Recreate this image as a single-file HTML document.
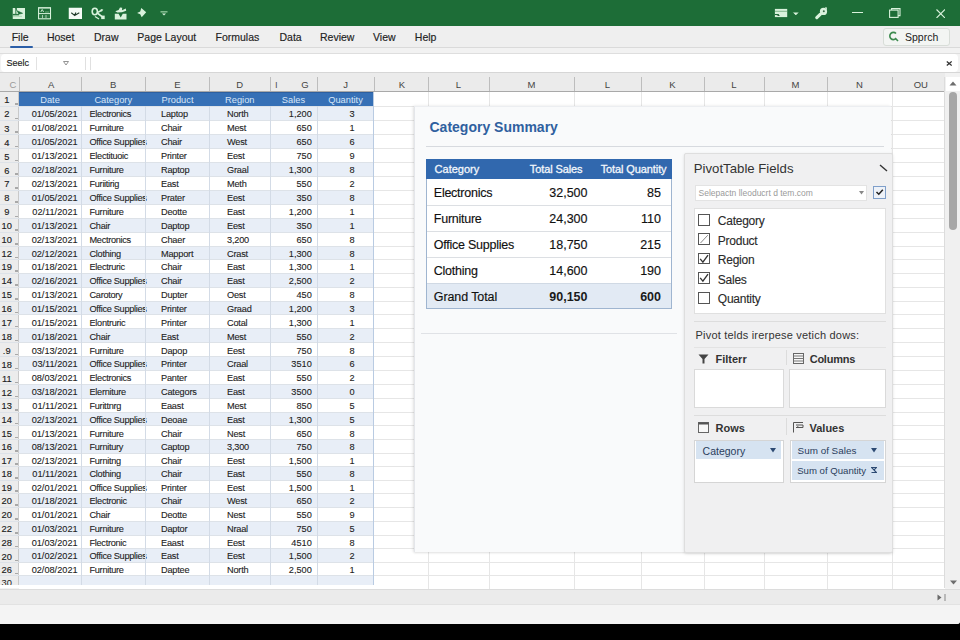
<!DOCTYPE html>
<html><head><meta charset="utf-8"><style>
*{box-sizing:border-box;margin:0;padding:0}
html,body{width:960px;height:640px;overflow:hidden;background:#000;font-family:"Liberation Sans",sans-serif;}
.a{position:absolute}
#app{position:absolute;left:0;top:0;width:960px;height:624px;background:#f2f2f2;overflow:hidden;border-bottom-right-radius:3px}
.t{position:absolute;white-space:nowrap;line-height:1}
</style></head><body><div id="app">

<div class="a" style="left:0;top:0;width:960px;height:25.5px;background:#1d6d37"></div>
<div class="a" style="left:0;top:25.5px;width:960px;height:21.5px;background:#efefef"></div>
<div class="a" style="left:0;top:47px;width:960px;height:1.2px;background:#dadada"></div>
<div class="a" style="left:0;top:53px;width:960px;height:1.2px;background:#dedede"></div>
<div class="a" style="left:1px;top:54px;width:957px;height:18px;background:#fff;border-radius:4px"></div>
<div class="a" style="left:0;top:72px;width:960px;height:1px;background:#d6d6d6"></div>
<div class="t" style="left:11.7px;top:32px;font-size:10.5px;color:#222;-webkit-text-stroke:0.15px #222">File</div>
<div class="t" style="left:46.9px;top:32px;font-size:10.5px;color:#222;-webkit-text-stroke:0.15px #222">Hoset</div>
<div class="t" style="left:94px;top:32px;font-size:10.5px;color:#222;-webkit-text-stroke:0.15px #222">Draw</div>
<div class="t" style="left:137.3px;top:32px;font-size:10.5px;color:#222;-webkit-text-stroke:0.15px #222">Page Layout</div>
<div class="t" style="left:215.5px;top:32px;font-size:10.5px;color:#222;-webkit-text-stroke:0.15px #222">Formulas</div>
<div class="t" style="left:279.5px;top:32px;font-size:10.5px;color:#222;-webkit-text-stroke:0.15px #222">Data</div>
<div class="t" style="left:320px;top:32px;font-size:10.5px;color:#222;-webkit-text-stroke:0.15px #222">Review</div>
<div class="t" style="left:373px;top:32px;font-size:10.5px;color:#222;-webkit-text-stroke:0.15px #222">View</div>
<div class="t" style="left:414.8px;top:32px;font-size:10.5px;color:#222;-webkit-text-stroke:0.15px #222">Help</div>
<div class="a" style="left:10px;top:46.3px;width:22.5px;height:2px;background:#2b5ea7;border-radius:1px"></div>
<div class="a" style="left:0;top:73px;width:944.5px;height:18.5px;background:#ebebeb;border-bottom:1px solid #a9a9a9"></div>
<div class="a" style="left:18.5px;top:77px;width:1px;height:14px;background:#bdbdbd"></div>
<div class="t" style="left:20.2px;width:62px;text-align:center;top:80px;font-size:9.5px;color:#444">A</div>
<div class="a" style="left:80.5px;top:77px;width:1px;height:14px;background:#bdbdbd"></div>
<div class="t" style="left:81px;width:64.5px;text-align:center;top:80px;font-size:9.5px;color:#444">B</div>
<div class="a" style="left:145.0px;top:77px;width:1px;height:14px;background:#bdbdbd"></div>
<div class="t" style="left:145.5px;width:64.0px;text-align:center;top:80px;font-size:9.5px;color:#444">E</div>
<div class="a" style="left:209.0px;top:77px;width:1px;height:14px;background:#bdbdbd"></div>
<div class="t" style="left:209.5px;width:60.5px;text-align:center;top:80px;font-size:9.5px;color:#444">D</div>
<div class="a" style="left:269.5px;top:77px;width:1px;height:14px;background:#bdbdbd"></div>
<div class="t" style="left:281.5px;width:47px;text-align:center;top:80px;font-size:9.5px;color:#444">G</div>
<div class="a" style="left:316.5px;top:77px;width:1px;height:14px;background:#bdbdbd"></div>
<div class="t" style="left:317px;width:57px;text-align:center;top:80px;font-size:9.5px;color:#444">J</div>
<div class="a" style="left:373.5px;top:77px;width:1px;height:14px;background:#bdbdbd"></div>
<div class="t" style="left:375px;width:54px;text-align:center;top:80px;font-size:9.5px;color:#444">K</div>
<div class="a" style="left:427.5px;top:77px;width:1px;height:14px;background:#bdbdbd"></div>
<div class="t" style="left:428px;width:61px;text-align:center;top:80px;font-size:9.5px;color:#444">L</div>
<div class="a" style="left:488.5px;top:77px;width:1px;height:14px;background:#bdbdbd"></div>
<div class="t" style="left:489px;width:85px;text-align:center;top:80px;font-size:9.5px;color:#444">M</div>
<div class="a" style="left:573.5px;top:77px;width:1px;height:14px;background:#bdbdbd"></div>
<div class="t" style="left:574px;width:67px;text-align:center;top:80px;font-size:9.5px;color:#444">L</div>
<div class="a" style="left:640.5px;top:77px;width:1px;height:14px;background:#bdbdbd"></div>
<div class="t" style="left:641px;width:63px;text-align:center;top:80px;font-size:9.5px;color:#444">K</div>
<div class="a" style="left:703.5px;top:77px;width:1px;height:14px;background:#bdbdbd"></div>
<div class="t" style="left:704px;width:60px;text-align:center;top:80px;font-size:9.5px;color:#444">L</div>
<div class="a" style="left:763.5px;top:77px;width:1px;height:14px;background:#bdbdbd"></div>
<div class="t" style="left:764px;width:63px;text-align:center;top:80px;font-size:9.5px;color:#444">M</div>
<div class="a" style="left:826.5px;top:77px;width:1px;height:14px;background:#bdbdbd"></div>
<div class="t" style="left:827px;width:65px;text-align:center;top:80px;font-size:9.5px;color:#444">N</div>
<div class="a" style="left:891.5px;top:77px;width:1px;height:14px;background:#bdbdbd"></div>
<div class="t" style="left:894.5px;width:52.5px;text-align:center;top:80px;font-size:9.5px;color:#444">OU</div>
<div class="t" style="left:9.5px;top:80px;font-size:9.5px;color:#999">C</div>

<div class="t" style="left:275px;top:80px;font-size:9.5px;color:#555">I</div>
<div class="a" style="left:19px;top:92.0px;width:925.5px;height:496.5px;background:#fff"></div>
<div class="a" style="left:0;top:92.0px;width:19px;height:493.5px;background:#ececec;border-right:1px solid #c9c9c9"></div>
<div class="a" style="left:374px;top:105.75px;width:570.5px;height:1px;background:#e6e6e6"></div>
<div class="a" style="left:374px;top:120.10px;width:570.5px;height:1px;background:#e6e6e6"></div>
<div class="a" style="left:374px;top:133.90px;width:570.5px;height:1px;background:#e6e6e6"></div>
<div class="a" style="left:374px;top:148.25px;width:570.5px;height:1px;background:#e6e6e6"></div>
<div class="a" style="left:374px;top:162.10px;width:570.5px;height:1px;background:#e6e6e6"></div>
<div class="a" style="left:374px;top:175.90px;width:570.5px;height:1px;background:#e6e6e6"></div>
<div class="a" style="left:374px;top:189.90px;width:570.5px;height:1px;background:#e6e6e6"></div>
<div class="a" style="left:374px;top:203.90px;width:570.5px;height:1px;background:#e6e6e6"></div>
<div class="a" style="left:374px;top:218.00px;width:570.5px;height:1px;background:#e6e6e6"></div>
<div class="a" style="left:374px;top:231.80px;width:570.5px;height:1px;background:#e6e6e6"></div>
<div class="a" style="left:374px;top:245.50px;width:570.5px;height:1px;background:#e6e6e6"></div>
<div class="a" style="left:374px;top:259.00px;width:570.5px;height:1px;background:#e6e6e6"></div>
<div class="a" style="left:374px;top:272.60px;width:570.5px;height:1px;background:#e6e6e6"></div>
<div class="a" style="left:374px;top:286.56px;width:570.5px;height:1px;background:#e6e6e6"></div>
<div class="a" style="left:374px;top:300.52px;width:570.5px;height:1px;background:#e6e6e6"></div>
<div class="a" style="left:374px;top:314.48px;width:570.5px;height:1px;background:#e6e6e6"></div>
<div class="a" style="left:374px;top:328.44px;width:570.5px;height:1px;background:#e6e6e6"></div>
<div class="a" style="left:374px;top:342.40px;width:570.5px;height:1px;background:#e6e6e6"></div>
<div class="a" style="left:374px;top:356.20px;width:570.5px;height:1px;background:#e6e6e6"></div>
<div class="a" style="left:374px;top:370.00px;width:570.5px;height:1px;background:#e6e6e6"></div>
<div class="a" style="left:374px;top:384.10px;width:570.5px;height:1px;background:#e6e6e6"></div>
<div class="a" style="left:374px;top:398.10px;width:570.5px;height:1px;background:#e6e6e6"></div>
<div class="a" style="left:374px;top:411.80px;width:570.5px;height:1px;background:#e6e6e6"></div>
<div class="a" style="left:374px;top:425.40px;width:570.5px;height:1px;background:#e6e6e6"></div>
<div class="a" style="left:374px;top:439.20px;width:570.5px;height:1px;background:#e6e6e6"></div>
<div class="a" style="left:374px;top:452.70px;width:570.5px;height:1px;background:#e6e6e6"></div>
<div class="a" style="left:374px;top:465.90px;width:570.5px;height:1px;background:#e6e6e6"></div>
<div class="a" style="left:374px;top:479.60px;width:570.5px;height:1px;background:#e6e6e6"></div>
<div class="a" style="left:374px;top:492.90px;width:570.5px;height:1px;background:#e6e6e6"></div>
<div class="a" style="left:374px;top:506.70px;width:570.5px;height:1px;background:#e6e6e6"></div>
<div class="a" style="left:374px;top:520.75px;width:570.5px;height:1px;background:#e6e6e6"></div>
<div class="a" style="left:374px;top:534.50px;width:570.5px;height:1px;background:#e6e6e6"></div>
<div class="a" style="left:374px;top:548.25px;width:570.5px;height:1px;background:#e6e6e6"></div>
<div class="a" style="left:374px;top:562.00px;width:570.5px;height:1px;background:#e6e6e6"></div>
<div class="a" style="left:374px;top:575.10px;width:570.5px;height:1px;background:#e6e6e6"></div>
<div class="a" style="left:374px;top:588.50px;width:570.5px;height:1px;background:#e6e6e6"></div>
<div class="a" style="left:427.5px;top:92.0px;width:1px;height:496.5px;background:#e6e6e6"></div>
<div class="a" style="left:488.5px;top:92.0px;width:1px;height:496.5px;background:#e6e6e6"></div>
<div class="a" style="left:573.5px;top:92.0px;width:1px;height:496.5px;background:#e6e6e6"></div>
<div class="a" style="left:640.5px;top:92.0px;width:1px;height:496.5px;background:#e6e6e6"></div>
<div class="a" style="left:703.5px;top:92.0px;width:1px;height:496.5px;background:#e6e6e6"></div>
<div class="a" style="left:763.5px;top:92.0px;width:1px;height:496.5px;background:#e6e6e6"></div>
<div class="a" style="left:826.5px;top:92.0px;width:1px;height:496.5px;background:#e6e6e6"></div>
<div class="a" style="left:891.5px;top:92.0px;width:1px;height:496.5px;background:#e6e6e6"></div>
<div class="a" style="left:19px;top:92.0px;width:355px;height:14.25px;background:#3670b6;border-top:1px solid #2d5f9f"></div>
<div class="t" style="left:19px;width:62px;text-align:center;top:95.60px;font-size:9.3px;color:#d6e6f9">Date</div>
<div class="t" style="left:81px;width:64.5px;text-align:center;top:95.60px;font-size:9.3px;color:#d6e6f9">Category</div>
<div class="t" style="left:145.5px;width:64.0px;text-align:center;top:95.60px;font-size:9.3px;color:#d6e6f9">Product</div>
<div class="t" style="left:209.5px;width:60.5px;text-align:center;top:95.60px;font-size:9.3px;color:#d6e6f9">Region</div>
<div class="t" style="left:270px;width:47px;text-align:center;top:95.60px;font-size:9.3px;color:#d6e6f9">Sales</div>
<div class="t" style="left:317px;width:57px;text-align:center;top:95.60px;font-size:9.3px;color:#d6e6f9">Quantity</div>
<div class="a" style="left:19px;top:106.25px;width:355px;height:14.35px;background:#e8eef7"></div>
<div class="a" style="left:0;top:105.75px;width:374px;height:1px;background:#dde2e8"></div>
<div class="t" style="left:0;width:13.5px;text-align:center;top:110.42px;font-size:9.3px;color:#222;-webkit-text-stroke:0.15px #222">2</div>
<div class="a" style="left:14.5px;top:117.60px;width:3px;height:1.5px;background:#a8a8a8"></div>
<div class="t" style="right:882.4px;top:110.22px;color:#222;font-size:9.2px;-webkit-text-stroke:0.1px #222">01/05/2021</div>
<div class="t" style="left:89.5px;top:110.22px;letter-spacing:-0.3px;color:#222;font-size:9.2px;-webkit-text-stroke:0.1px #222">Electronics</div>
<div class="t" style="left:161px;top:110.22px;letter-spacing:-0.2px;color:#222;font-size:9.2px;-webkit-text-stroke:0.1px #222">Laptop</div>
<div class="t" style="left:227px;top:110.22px;letter-spacing:-0.2px;color:#222;font-size:9.2px;-webkit-text-stroke:0.1px #222">North</div>
<div class="t" style="right:648.2px;top:110.22px;color:#222;font-size:9.2px;-webkit-text-stroke:0.1px #222">1,200</div>
<div class="t" style="left:317px;width:70px;text-align:center;top:110.22px;color:#222;font-size:9.2px;-webkit-text-stroke:0.1px #222">3</div>
<div class="a" style="left:19px;top:120.60px;width:355px;height:13.80px;background:#ffffff"></div>
<div class="a" style="left:0;top:120.10px;width:374px;height:1px;background:#dde2e8"></div>
<div class="t" style="left:0;width:13.5px;text-align:center;top:124.50px;font-size:9.3px;color:#222;-webkit-text-stroke:0.15px #222">3</div>
<div class="a" style="left:14.5px;top:131.40px;width:3px;height:1.5px;background:#a8a8a8"></div>
<div class="t" style="right:882.4px;top:124.30px;color:#222;font-size:9.2px;-webkit-text-stroke:0.1px #222">01/08/2021</div>
<div class="t" style="left:89.5px;top:124.30px;letter-spacing:-0.3px;color:#222;font-size:9.2px;-webkit-text-stroke:0.1px #222">Furniture</div>
<div class="t" style="left:161px;top:124.30px;letter-spacing:-0.2px;color:#222;font-size:9.2px;-webkit-text-stroke:0.1px #222">Chair</div>
<div class="t" style="left:227px;top:124.30px;letter-spacing:-0.2px;color:#222;font-size:9.2px;-webkit-text-stroke:0.1px #222">Mest</div>
<div class="t" style="right:648.2px;top:124.30px;color:#222;font-size:9.2px;-webkit-text-stroke:0.1px #222">650</div>
<div class="t" style="left:317px;width:70px;text-align:center;top:124.30px;color:#222;font-size:9.2px;-webkit-text-stroke:0.1px #222">1</div>
<div class="a" style="left:19px;top:134.40px;width:355px;height:14.35px;background:#e8eef7"></div>
<div class="a" style="left:0;top:133.90px;width:374px;height:1px;background:#dde2e8"></div>
<div class="t" style="left:0;width:13.5px;text-align:center;top:138.57px;font-size:9.3px;color:#222;-webkit-text-stroke:0.15px #222">4</div>
<div class="a" style="left:14.5px;top:145.75px;width:3px;height:1.5px;background:#a8a8a8"></div>
<div class="t" style="right:882.4px;top:138.38px;color:#222;font-size:9.2px;-webkit-text-stroke:0.1px #222">01/05/2021</div>
<div class="t" style="left:89.5px;top:138.38px;letter-spacing:-0.3px;color:#222;font-size:9.2px;-webkit-text-stroke:0.1px #222">Office Supplies</div>
<div class="t" style="left:161px;top:138.38px;letter-spacing:-0.2px;color:#222;font-size:9.2px;-webkit-text-stroke:0.1px #222">Chair</div>
<div class="t" style="left:227px;top:138.38px;letter-spacing:-0.2px;color:#222;font-size:9.2px;-webkit-text-stroke:0.1px #222">West</div>
<div class="t" style="right:648.2px;top:138.38px;color:#222;font-size:9.2px;-webkit-text-stroke:0.1px #222">650</div>
<div class="t" style="left:317px;width:70px;text-align:center;top:138.38px;color:#222;font-size:9.2px;-webkit-text-stroke:0.1px #222">6</div>
<div class="a" style="left:19px;top:148.75px;width:355px;height:13.85px;background:#ffffff"></div>
<div class="a" style="left:0;top:148.25px;width:374px;height:1px;background:#dde2e8"></div>
<div class="t" style="left:0;width:13.5px;text-align:center;top:152.68px;font-size:9.3px;color:#222;-webkit-text-stroke:0.15px #222">5</div>
<div class="a" style="left:14.5px;top:159.60px;width:3px;height:1.5px;background:#a8a8a8"></div>
<div class="t" style="right:882.4px;top:152.48px;color:#222;font-size:9.2px;-webkit-text-stroke:0.1px #222">01/13/2021</div>
<div class="t" style="left:89.5px;top:152.48px;letter-spacing:-0.3px;color:#222;font-size:9.2px;-webkit-text-stroke:0.1px #222">Electituoic</div>
<div class="t" style="left:161px;top:152.48px;letter-spacing:-0.2px;color:#222;font-size:9.2px;-webkit-text-stroke:0.1px #222">Printer</div>
<div class="t" style="left:227px;top:152.48px;letter-spacing:-0.2px;color:#222;font-size:9.2px;-webkit-text-stroke:0.1px #222">Eest</div>
<div class="t" style="right:648.2px;top:152.48px;color:#222;font-size:9.2px;-webkit-text-stroke:0.1px #222">750</div>
<div class="t" style="left:317px;width:70px;text-align:center;top:152.48px;color:#222;font-size:9.2px;-webkit-text-stroke:0.1px #222">9</div>
<div class="a" style="left:19px;top:162.60px;width:355px;height:13.80px;background:#e8eef7"></div>
<div class="a" style="left:0;top:162.10px;width:374px;height:1px;background:#dde2e8"></div>
<div class="t" style="left:0;width:13.5px;text-align:center;top:166.50px;font-size:9.3px;color:#222;-webkit-text-stroke:0.15px #222">6</div>
<div class="a" style="left:14.5px;top:173.40px;width:3px;height:1.5px;background:#a8a8a8"></div>
<div class="t" style="right:882.4px;top:166.30px;color:#222;font-size:9.2px;-webkit-text-stroke:0.1px #222">02/18/2021</div>
<div class="t" style="left:89.5px;top:166.30px;letter-spacing:-0.3px;color:#222;font-size:9.2px;-webkit-text-stroke:0.1px #222">Furniture</div>
<div class="t" style="left:161px;top:166.30px;letter-spacing:-0.2px;color:#222;font-size:9.2px;-webkit-text-stroke:0.1px #222">Raptop</div>
<div class="t" style="left:227px;top:166.30px;letter-spacing:-0.2px;color:#222;font-size:9.2px;-webkit-text-stroke:0.1px #222">Graal</div>
<div class="t" style="right:648.2px;top:166.30px;color:#222;font-size:9.2px;-webkit-text-stroke:0.1px #222">1,300</div>
<div class="t" style="left:317px;width:70px;text-align:center;top:166.30px;color:#222;font-size:9.2px;-webkit-text-stroke:0.1px #222">8</div>
<div class="a" style="left:19px;top:176.40px;width:355px;height:14.00px;background:#ffffff"></div>
<div class="a" style="left:0;top:175.90px;width:374px;height:1px;background:#dde2e8"></div>
<div class="t" style="left:0;width:13.5px;text-align:center;top:180.40px;font-size:9.3px;color:#222;-webkit-text-stroke:0.15px #222">7</div>
<div class="a" style="left:14.5px;top:187.40px;width:3px;height:1.5px;background:#a8a8a8"></div>
<div class="t" style="right:882.4px;top:180.20px;color:#222;font-size:9.2px;-webkit-text-stroke:0.1px #222">02/13/2021</div>
<div class="t" style="left:89.5px;top:180.20px;letter-spacing:-0.3px;color:#222;font-size:9.2px;-webkit-text-stroke:0.1px #222">Furiitirig</div>
<div class="t" style="left:161px;top:180.20px;letter-spacing:-0.2px;color:#222;font-size:9.2px;-webkit-text-stroke:0.1px #222">East</div>
<div class="t" style="left:227px;top:180.20px;letter-spacing:-0.2px;color:#222;font-size:9.2px;-webkit-text-stroke:0.1px #222">Meth</div>
<div class="t" style="right:648.2px;top:180.20px;color:#222;font-size:9.2px;-webkit-text-stroke:0.1px #222">550</div>
<div class="t" style="left:317px;width:70px;text-align:center;top:180.20px;color:#222;font-size:9.2px;-webkit-text-stroke:0.1px #222">2</div>
<div class="a" style="left:19px;top:190.40px;width:355px;height:14.00px;background:#e8eef7"></div>
<div class="a" style="left:0;top:189.90px;width:374px;height:1px;background:#dde2e8"></div>
<div class="t" style="left:0;width:13.5px;text-align:center;top:194.40px;font-size:9.3px;color:#222;-webkit-text-stroke:0.15px #222">8</div>
<div class="a" style="left:14.5px;top:201.40px;width:3px;height:1.5px;background:#a8a8a8"></div>
<div class="t" style="right:882.4px;top:194.20px;color:#222;font-size:9.2px;-webkit-text-stroke:0.1px #222">01/05/2021</div>
<div class="t" style="left:89.5px;top:194.20px;letter-spacing:-0.3px;color:#222;font-size:9.2px;-webkit-text-stroke:0.1px #222">Office Supplies</div>
<div class="t" style="left:161px;top:194.20px;letter-spacing:-0.2px;color:#222;font-size:9.2px;-webkit-text-stroke:0.1px #222">Prater</div>
<div class="t" style="left:227px;top:194.20px;letter-spacing:-0.2px;color:#222;font-size:9.2px;-webkit-text-stroke:0.1px #222">Eest</div>
<div class="t" style="right:648.2px;top:194.20px;color:#222;font-size:9.2px;-webkit-text-stroke:0.1px #222">350</div>
<div class="t" style="left:317px;width:70px;text-align:center;top:194.20px;color:#222;font-size:9.2px;-webkit-text-stroke:0.1px #222">8</div>
<div class="a" style="left:19px;top:204.40px;width:355px;height:14.10px;background:#ffffff"></div>
<div class="a" style="left:0;top:203.90px;width:374px;height:1px;background:#dde2e8"></div>
<div class="t" style="left:0;width:13.5px;text-align:center;top:208.45px;font-size:9.3px;color:#222;-webkit-text-stroke:0.15px #222">9</div>
<div class="a" style="left:14.5px;top:215.50px;width:3px;height:1.5px;background:#a8a8a8"></div>
<div class="t" style="right:882.4px;top:208.25px;color:#222;font-size:9.2px;-webkit-text-stroke:0.1px #222">02/11/2021</div>
<div class="t" style="left:89.5px;top:208.25px;letter-spacing:-0.3px;color:#222;font-size:9.2px;-webkit-text-stroke:0.1px #222">Furniture</div>
<div class="t" style="left:161px;top:208.25px;letter-spacing:-0.2px;color:#222;font-size:9.2px;-webkit-text-stroke:0.1px #222">Deotte</div>
<div class="t" style="left:227px;top:208.25px;letter-spacing:-0.2px;color:#222;font-size:9.2px;-webkit-text-stroke:0.1px #222">East</div>
<div class="t" style="right:648.2px;top:208.25px;color:#222;font-size:9.2px;-webkit-text-stroke:0.1px #222">1,200</div>
<div class="t" style="left:317px;width:70px;text-align:center;top:208.25px;color:#222;font-size:9.2px;-webkit-text-stroke:0.1px #222">1</div>
<div class="a" style="left:19px;top:218.50px;width:355px;height:13.80px;background:#e8eef7"></div>
<div class="a" style="left:0;top:218.00px;width:374px;height:1px;background:#dde2e8"></div>
<div class="t" style="left:0;width:13.5px;text-align:center;top:222.40px;font-size:9.3px;color:#222;-webkit-text-stroke:0.15px #222">10</div>
<div class="a" style="left:14.5px;top:229.30px;width:3px;height:1.5px;background:#a8a8a8"></div>
<div class="t" style="right:882.4px;top:222.20px;color:#222;font-size:9.2px;-webkit-text-stroke:0.1px #222">01/13/2021</div>
<div class="t" style="left:89.5px;top:222.20px;letter-spacing:-0.3px;color:#222;font-size:9.2px;-webkit-text-stroke:0.1px #222">Chair</div>
<div class="t" style="left:161px;top:222.20px;letter-spacing:-0.2px;color:#222;font-size:9.2px;-webkit-text-stroke:0.1px #222">Daptop</div>
<div class="t" style="left:227px;top:222.20px;letter-spacing:-0.2px;color:#222;font-size:9.2px;-webkit-text-stroke:0.1px #222">Eest</div>
<div class="t" style="right:648.2px;top:222.20px;color:#222;font-size:9.2px;-webkit-text-stroke:0.1px #222">350</div>
<div class="t" style="left:317px;width:70px;text-align:center;top:222.20px;color:#222;font-size:9.2px;-webkit-text-stroke:0.1px #222">1</div>
<div class="a" style="left:19px;top:232.30px;width:355px;height:13.70px;background:#ffffff"></div>
<div class="a" style="left:0;top:231.80px;width:374px;height:1px;background:#dde2e8"></div>
<div class="t" style="left:0;width:13.5px;text-align:center;top:236.15px;font-size:9.3px;color:#222;-webkit-text-stroke:0.15px #222">10</div>
<div class="a" style="left:14.5px;top:243.00px;width:3px;height:1.5px;background:#a8a8a8"></div>
<div class="t" style="right:882.4px;top:235.95px;color:#222;font-size:9.2px;-webkit-text-stroke:0.1px #222">02/13/2021</div>
<div class="t" style="left:89.5px;top:235.95px;letter-spacing:-0.3px;color:#222;font-size:9.2px;-webkit-text-stroke:0.1px #222">Mectronics</div>
<div class="t" style="left:161px;top:235.95px;letter-spacing:-0.2px;color:#222;font-size:9.2px;-webkit-text-stroke:0.1px #222">Chaer</div>
<div class="t" style="left:227px;top:235.95px;letter-spacing:-0.2px;color:#222;font-size:9.2px;-webkit-text-stroke:0.1px #222">3,200</div>
<div class="t" style="right:648.2px;top:235.95px;color:#222;font-size:9.2px;-webkit-text-stroke:0.1px #222">650</div>
<div class="t" style="left:317px;width:70px;text-align:center;top:235.95px;color:#222;font-size:9.2px;-webkit-text-stroke:0.1px #222">8</div>
<div class="a" style="left:19px;top:246.00px;width:355px;height:13.50px;background:#e8eef7"></div>
<div class="a" style="left:0;top:245.50px;width:374px;height:1px;background:#dde2e8"></div>
<div class="t" style="left:0;width:13.5px;text-align:center;top:249.75px;font-size:9.3px;color:#222;-webkit-text-stroke:0.15px #222">12</div>
<div class="a" style="left:14.5px;top:256.50px;width:3px;height:1.5px;background:#a8a8a8"></div>
<div class="t" style="right:882.4px;top:249.55px;color:#222;font-size:9.2px;-webkit-text-stroke:0.1px #222">02/12/2021</div>
<div class="t" style="left:89.5px;top:249.55px;letter-spacing:-0.3px;color:#222;font-size:9.2px;-webkit-text-stroke:0.1px #222">Clothing</div>
<div class="t" style="left:161px;top:249.55px;letter-spacing:-0.2px;color:#222;font-size:9.2px;-webkit-text-stroke:0.1px #222">Mapport</div>
<div class="t" style="left:227px;top:249.55px;letter-spacing:-0.2px;color:#222;font-size:9.2px;-webkit-text-stroke:0.1px #222">Crast</div>
<div class="t" style="right:648.2px;top:249.55px;color:#222;font-size:9.2px;-webkit-text-stroke:0.1px #222">1,300</div>
<div class="t" style="left:317px;width:70px;text-align:center;top:249.55px;color:#222;font-size:9.2px;-webkit-text-stroke:0.1px #222">8</div>
<div class="a" style="left:19px;top:259.50px;width:355px;height:13.60px;background:#ffffff"></div>
<div class="a" style="left:0;top:259.00px;width:374px;height:1px;background:#dde2e8"></div>
<div class="t" style="left:0;width:13.5px;text-align:center;top:263.30px;font-size:9.3px;color:#222;-webkit-text-stroke:0.15px #222">19</div>
<div class="a" style="left:14.5px;top:270.10px;width:3px;height:1.5px;background:#a8a8a8"></div>
<div class="t" style="right:882.4px;top:263.10px;color:#222;font-size:9.2px;-webkit-text-stroke:0.1px #222">01/18/2021</div>
<div class="t" style="left:89.5px;top:263.10px;letter-spacing:-0.3px;color:#222;font-size:9.2px;-webkit-text-stroke:0.1px #222">Electruric</div>
<div class="t" style="left:161px;top:263.10px;letter-spacing:-0.2px;color:#222;font-size:9.2px;-webkit-text-stroke:0.1px #222">Chair</div>
<div class="t" style="left:227px;top:263.10px;letter-spacing:-0.2px;color:#222;font-size:9.2px;-webkit-text-stroke:0.1px #222">East</div>
<div class="t" style="right:648.2px;top:263.10px;color:#222;font-size:9.2px;-webkit-text-stroke:0.1px #222">1,300</div>
<div class="t" style="left:317px;width:70px;text-align:center;top:263.10px;color:#222;font-size:9.2px;-webkit-text-stroke:0.1px #222">1</div>
<div class="a" style="left:19px;top:273.10px;width:355px;height:13.96px;background:#e8eef7"></div>
<div class="a" style="left:0;top:272.60px;width:374px;height:1px;background:#dde2e8"></div>
<div class="t" style="left:0;width:13.5px;text-align:center;top:277.08px;font-size:9.3px;color:#222;-webkit-text-stroke:0.15px #222">14</div>
<div class="a" style="left:14.5px;top:284.06px;width:3px;height:1.5px;background:#a8a8a8"></div>
<div class="t" style="right:882.4px;top:276.88px;color:#222;font-size:9.2px;-webkit-text-stroke:0.1px #222">02/16/2021</div>
<div class="t" style="left:89.5px;top:276.88px;letter-spacing:-0.3px;color:#222;font-size:9.2px;-webkit-text-stroke:0.1px #222">Office Supplies</div>
<div class="t" style="left:161px;top:276.88px;letter-spacing:-0.2px;color:#222;font-size:9.2px;-webkit-text-stroke:0.1px #222">Chair</div>
<div class="t" style="left:227px;top:276.88px;letter-spacing:-0.2px;color:#222;font-size:9.2px;-webkit-text-stroke:0.1px #222">East</div>
<div class="t" style="right:648.2px;top:276.88px;color:#222;font-size:9.2px;-webkit-text-stroke:0.1px #222">2,500</div>
<div class="t" style="left:317px;width:70px;text-align:center;top:276.88px;color:#222;font-size:9.2px;-webkit-text-stroke:0.1px #222">2</div>
<div class="a" style="left:19px;top:287.06px;width:355px;height:13.96px;background:#ffffff"></div>
<div class="a" style="left:0;top:286.56px;width:374px;height:1px;background:#dde2e8"></div>
<div class="t" style="left:0;width:13.5px;text-align:center;top:291.04px;font-size:9.3px;color:#222;-webkit-text-stroke:0.15px #222">15</div>
<div class="a" style="left:14.5px;top:298.02px;width:3px;height:1.5px;background:#a8a8a8"></div>
<div class="t" style="right:882.4px;top:290.84px;color:#222;font-size:9.2px;-webkit-text-stroke:0.1px #222">01/13/2021</div>
<div class="t" style="left:89.5px;top:290.84px;letter-spacing:-0.3px;color:#222;font-size:9.2px;-webkit-text-stroke:0.1px #222">Carotory</div>
<div class="t" style="left:161px;top:290.84px;letter-spacing:-0.2px;color:#222;font-size:9.2px;-webkit-text-stroke:0.1px #222">Dupter</div>
<div class="t" style="left:227px;top:290.84px;letter-spacing:-0.2px;color:#222;font-size:9.2px;-webkit-text-stroke:0.1px #222">Oest</div>
<div class="t" style="right:648.2px;top:290.84px;color:#222;font-size:9.2px;-webkit-text-stroke:0.1px #222">450</div>
<div class="t" style="left:317px;width:70px;text-align:center;top:290.84px;color:#222;font-size:9.2px;-webkit-text-stroke:0.1px #222">8</div>
<div class="a" style="left:19px;top:301.02px;width:355px;height:13.96px;background:#e8eef7"></div>
<div class="a" style="left:0;top:300.52px;width:374px;height:1px;background:#dde2e8"></div>
<div class="t" style="left:0;width:13.5px;text-align:center;top:305.00px;font-size:9.3px;color:#222;-webkit-text-stroke:0.15px #222">16</div>
<div class="a" style="left:14.5px;top:311.98px;width:3px;height:1.5px;background:#a8a8a8"></div>
<div class="t" style="right:882.4px;top:304.80px;color:#222;font-size:9.2px;-webkit-text-stroke:0.1px #222">01/15/2021</div>
<div class="t" style="left:89.5px;top:304.80px;letter-spacing:-0.3px;color:#222;font-size:9.2px;-webkit-text-stroke:0.1px #222">Office Supplies</div>
<div class="t" style="left:161px;top:304.80px;letter-spacing:-0.2px;color:#222;font-size:9.2px;-webkit-text-stroke:0.1px #222">Printer</div>
<div class="t" style="left:227px;top:304.80px;letter-spacing:-0.2px;color:#222;font-size:9.2px;-webkit-text-stroke:0.1px #222">Graad</div>
<div class="t" style="right:648.2px;top:304.80px;color:#222;font-size:9.2px;-webkit-text-stroke:0.1px #222">1,200</div>
<div class="t" style="left:317px;width:70px;text-align:center;top:304.80px;color:#222;font-size:9.2px;-webkit-text-stroke:0.1px #222">3</div>
<div class="a" style="left:19px;top:314.98px;width:355px;height:13.96px;background:#ffffff"></div>
<div class="a" style="left:0;top:314.48px;width:374px;height:1px;background:#dde2e8"></div>
<div class="t" style="left:0;width:13.5px;text-align:center;top:318.96px;font-size:9.3px;color:#222;-webkit-text-stroke:0.15px #222">17</div>
<div class="a" style="left:14.5px;top:325.94px;width:3px;height:1.5px;background:#a8a8a8"></div>
<div class="t" style="right:882.4px;top:318.76px;color:#222;font-size:9.2px;-webkit-text-stroke:0.1px #222">01/15/2021</div>
<div class="t" style="left:89.5px;top:318.76px;letter-spacing:-0.3px;color:#222;font-size:9.2px;-webkit-text-stroke:0.1px #222">Elontruric</div>
<div class="t" style="left:161px;top:318.76px;letter-spacing:-0.2px;color:#222;font-size:9.2px;-webkit-text-stroke:0.1px #222">Printer</div>
<div class="t" style="left:227px;top:318.76px;letter-spacing:-0.2px;color:#222;font-size:9.2px;-webkit-text-stroke:0.1px #222">Cotal</div>
<div class="t" style="right:648.2px;top:318.76px;color:#222;font-size:9.2px;-webkit-text-stroke:0.1px #222">1,300</div>
<div class="t" style="left:317px;width:70px;text-align:center;top:318.76px;color:#222;font-size:9.2px;-webkit-text-stroke:0.1px #222">1</div>
<div class="a" style="left:19px;top:328.94px;width:355px;height:13.96px;background:#e8eef7"></div>
<div class="a" style="left:0;top:328.44px;width:374px;height:1px;background:#dde2e8"></div>
<div class="t" style="left:0;width:13.5px;text-align:center;top:332.92px;font-size:9.3px;color:#222;-webkit-text-stroke:0.15px #222">18</div>
<div class="a" style="left:14.5px;top:339.90px;width:3px;height:1.5px;background:#a8a8a8"></div>
<div class="t" style="right:882.4px;top:332.72px;color:#222;font-size:9.2px;-webkit-text-stroke:0.1px #222">01/18/2021</div>
<div class="t" style="left:89.5px;top:332.72px;letter-spacing:-0.3px;color:#222;font-size:9.2px;-webkit-text-stroke:0.1px #222">Chair</div>
<div class="t" style="left:161px;top:332.72px;letter-spacing:-0.2px;color:#222;font-size:9.2px;-webkit-text-stroke:0.1px #222">East</div>
<div class="t" style="left:227px;top:332.72px;letter-spacing:-0.2px;color:#222;font-size:9.2px;-webkit-text-stroke:0.1px #222">Mest</div>
<div class="t" style="right:648.2px;top:332.72px;color:#222;font-size:9.2px;-webkit-text-stroke:0.1px #222">550</div>
<div class="t" style="left:317px;width:70px;text-align:center;top:332.72px;color:#222;font-size:9.2px;-webkit-text-stroke:0.1px #222">2</div>
<div class="a" style="left:19px;top:342.90px;width:355px;height:13.80px;background:#ffffff"></div>
<div class="a" style="left:0;top:342.40px;width:374px;height:1px;background:#dde2e8"></div>
<div class="t" style="left:0;width:13.5px;text-align:center;top:346.80px;font-size:9.3px;color:#222;-webkit-text-stroke:0.15px #222">.9</div>
<div class="a" style="left:14.5px;top:353.70px;width:3px;height:1.5px;background:#a8a8a8"></div>
<div class="t" style="right:882.4px;top:346.60px;color:#222;font-size:9.2px;-webkit-text-stroke:0.1px #222">03/13/2021</div>
<div class="t" style="left:89.5px;top:346.60px;letter-spacing:-0.3px;color:#222;font-size:9.2px;-webkit-text-stroke:0.1px #222">Furniture</div>
<div class="t" style="left:161px;top:346.60px;letter-spacing:-0.2px;color:#222;font-size:9.2px;-webkit-text-stroke:0.1px #222">Dapop</div>
<div class="t" style="left:227px;top:346.60px;letter-spacing:-0.2px;color:#222;font-size:9.2px;-webkit-text-stroke:0.1px #222">Eest</div>
<div class="t" style="right:648.2px;top:346.60px;color:#222;font-size:9.2px;-webkit-text-stroke:0.1px #222">750</div>
<div class="t" style="left:317px;width:70px;text-align:center;top:346.60px;color:#222;font-size:9.2px;-webkit-text-stroke:0.1px #222">8</div>
<div class="a" style="left:19px;top:356.70px;width:355px;height:13.80px;background:#e8eef7"></div>
<div class="a" style="left:0;top:356.20px;width:374px;height:1px;background:#dde2e8"></div>
<div class="t" style="left:0;width:13.5px;text-align:center;top:360.60px;font-size:9.3px;color:#222;-webkit-text-stroke:0.15px #222">18</div>
<div class="a" style="left:14.5px;top:367.50px;width:3px;height:1.5px;background:#a8a8a8"></div>
<div class="t" style="right:882.4px;top:360.40px;color:#222;font-size:9.2px;-webkit-text-stroke:0.1px #222">03/11/2021</div>
<div class="t" style="left:89.5px;top:360.40px;letter-spacing:-0.3px;color:#222;font-size:9.2px;-webkit-text-stroke:0.1px #222">Office Supplies</div>
<div class="t" style="left:161px;top:360.40px;letter-spacing:-0.2px;color:#222;font-size:9.2px;-webkit-text-stroke:0.1px #222">Printer</div>
<div class="t" style="left:227px;top:360.40px;letter-spacing:-0.2px;color:#222;font-size:9.2px;-webkit-text-stroke:0.1px #222">Craal</div>
<div class="t" style="right:648.2px;top:360.40px;color:#222;font-size:9.2px;-webkit-text-stroke:0.1px #222">3510</div>
<div class="t" style="left:317px;width:70px;text-align:center;top:360.40px;color:#222;font-size:9.2px;-webkit-text-stroke:0.1px #222">6</div>
<div class="a" style="left:19px;top:370.50px;width:355px;height:14.10px;background:#ffffff"></div>
<div class="a" style="left:0;top:370.00px;width:374px;height:1px;background:#dde2e8"></div>
<div class="t" style="left:0;width:13.5px;text-align:center;top:374.55px;font-size:9.3px;color:#222;-webkit-text-stroke:0.15px #222">11</div>
<div class="a" style="left:14.5px;top:381.60px;width:3px;height:1.5px;background:#a8a8a8"></div>
<div class="t" style="right:882.4px;top:374.35px;color:#222;font-size:9.2px;-webkit-text-stroke:0.1px #222">08/03/2021</div>
<div class="t" style="left:89.5px;top:374.35px;letter-spacing:-0.3px;color:#222;font-size:9.2px;-webkit-text-stroke:0.1px #222">Electronics</div>
<div class="t" style="left:161px;top:374.35px;letter-spacing:-0.2px;color:#222;font-size:9.2px;-webkit-text-stroke:0.1px #222">Panter</div>
<div class="t" style="left:227px;top:374.35px;letter-spacing:-0.2px;color:#222;font-size:9.2px;-webkit-text-stroke:0.1px #222">East</div>
<div class="t" style="right:648.2px;top:374.35px;color:#222;font-size:9.2px;-webkit-text-stroke:0.1px #222">550</div>
<div class="t" style="left:317px;width:70px;text-align:center;top:374.35px;color:#222;font-size:9.2px;-webkit-text-stroke:0.1px #222">2</div>
<div class="a" style="left:19px;top:384.60px;width:355px;height:14.00px;background:#e8eef7"></div>
<div class="a" style="left:0;top:384.10px;width:374px;height:1px;background:#dde2e8"></div>
<div class="t" style="left:0;width:13.5px;text-align:center;top:388.60px;font-size:9.3px;color:#222;-webkit-text-stroke:0.15px #222">12</div>
<div class="a" style="left:14.5px;top:395.60px;width:3px;height:1.5px;background:#a8a8a8"></div>
<div class="t" style="right:882.4px;top:388.40px;color:#222;font-size:9.2px;-webkit-text-stroke:0.1px #222">03/18/2021</div>
<div class="t" style="left:89.5px;top:388.40px;letter-spacing:-0.3px;color:#222;font-size:9.2px;-webkit-text-stroke:0.1px #222">Elerniture</div>
<div class="t" style="left:161px;top:388.40px;letter-spacing:-0.2px;color:#222;font-size:9.2px;-webkit-text-stroke:0.1px #222">Categors</div>
<div class="t" style="left:227px;top:388.40px;letter-spacing:-0.2px;color:#222;font-size:9.2px;-webkit-text-stroke:0.1px #222">East</div>
<div class="t" style="right:648.2px;top:388.40px;color:#222;font-size:9.2px;-webkit-text-stroke:0.1px #222">3500</div>
<div class="t" style="left:317px;width:70px;text-align:center;top:388.40px;color:#222;font-size:9.2px;-webkit-text-stroke:0.1px #222">0</div>
<div class="a" style="left:19px;top:398.60px;width:355px;height:13.70px;background:#ffffff"></div>
<div class="a" style="left:0;top:398.10px;width:374px;height:1px;background:#dde2e8"></div>
<div class="t" style="left:0;width:13.5px;text-align:center;top:402.45px;font-size:9.3px;color:#222;-webkit-text-stroke:0.15px #222">13</div>
<div class="a" style="left:14.5px;top:409.30px;width:3px;height:1.5px;background:#a8a8a8"></div>
<div class="t" style="right:882.4px;top:402.25px;color:#222;font-size:9.2px;-webkit-text-stroke:0.1px #222">01/11/2021</div>
<div class="t" style="left:89.5px;top:402.25px;letter-spacing:-0.3px;color:#222;font-size:9.2px;-webkit-text-stroke:0.1px #222">Furittnrg</div>
<div class="t" style="left:161px;top:402.25px;letter-spacing:-0.2px;color:#222;font-size:9.2px;-webkit-text-stroke:0.1px #222">Eaast</div>
<div class="t" style="left:227px;top:402.25px;letter-spacing:-0.2px;color:#222;font-size:9.2px;-webkit-text-stroke:0.1px #222">Mest</div>
<div class="t" style="right:648.2px;top:402.25px;color:#222;font-size:9.2px;-webkit-text-stroke:0.1px #222">850</div>
<div class="t" style="left:317px;width:70px;text-align:center;top:402.25px;color:#222;font-size:9.2px;-webkit-text-stroke:0.1px #222">5</div>
<div class="a" style="left:19px;top:412.30px;width:355px;height:13.60px;background:#e8eef7"></div>
<div class="a" style="left:0;top:411.80px;width:374px;height:1px;background:#dde2e8"></div>
<div class="t" style="left:0;width:13.5px;text-align:center;top:416.10px;font-size:9.3px;color:#222;-webkit-text-stroke:0.15px #222">14</div>
<div class="a" style="left:14.5px;top:422.90px;width:3px;height:1.5px;background:#a8a8a8"></div>
<div class="t" style="right:882.4px;top:415.90px;color:#222;font-size:9.2px;-webkit-text-stroke:0.1px #222">02/13/2021</div>
<div class="t" style="left:89.5px;top:415.90px;letter-spacing:-0.3px;color:#222;font-size:9.2px;-webkit-text-stroke:0.1px #222">Office Supplies</div>
<div class="t" style="left:161px;top:415.90px;letter-spacing:-0.2px;color:#222;font-size:9.2px;-webkit-text-stroke:0.1px #222">Deoae</div>
<div class="t" style="left:227px;top:415.90px;letter-spacing:-0.2px;color:#222;font-size:9.2px;-webkit-text-stroke:0.1px #222">East</div>
<div class="t" style="right:648.2px;top:415.90px;color:#222;font-size:9.2px;-webkit-text-stroke:0.1px #222">1,300</div>
<div class="t" style="left:317px;width:70px;text-align:center;top:415.90px;color:#222;font-size:9.2px;-webkit-text-stroke:0.1px #222">5</div>
<div class="a" style="left:19px;top:425.90px;width:355px;height:13.80px;background:#ffffff"></div>
<div class="a" style="left:0;top:425.40px;width:374px;height:1px;background:#dde2e8"></div>
<div class="t" style="left:0;width:13.5px;text-align:center;top:429.80px;font-size:9.3px;color:#222;-webkit-text-stroke:0.15px #222">15</div>
<div class="a" style="left:14.5px;top:436.70px;width:3px;height:1.5px;background:#a8a8a8"></div>
<div class="t" style="right:882.4px;top:429.60px;color:#222;font-size:9.2px;-webkit-text-stroke:0.1px #222">01/13/2021</div>
<div class="t" style="left:89.5px;top:429.60px;letter-spacing:-0.3px;color:#222;font-size:9.2px;-webkit-text-stroke:0.1px #222">Furniture</div>
<div class="t" style="left:161px;top:429.60px;letter-spacing:-0.2px;color:#222;font-size:9.2px;-webkit-text-stroke:0.1px #222">Chair</div>
<div class="t" style="left:227px;top:429.60px;letter-spacing:-0.2px;color:#222;font-size:9.2px;-webkit-text-stroke:0.1px #222">Nest</div>
<div class="t" style="right:648.2px;top:429.60px;color:#222;font-size:9.2px;-webkit-text-stroke:0.1px #222">650</div>
<div class="t" style="left:317px;width:70px;text-align:center;top:429.60px;color:#222;font-size:9.2px;-webkit-text-stroke:0.1px #222">8</div>
<div class="a" style="left:19px;top:439.70px;width:355px;height:13.50px;background:#e8eef7"></div>
<div class="a" style="left:0;top:439.20px;width:374px;height:1px;background:#dde2e8"></div>
<div class="t" style="left:0;width:13.5px;text-align:center;top:443.45px;font-size:9.3px;color:#222;-webkit-text-stroke:0.15px #222">16</div>
<div class="a" style="left:14.5px;top:450.20px;width:3px;height:1.5px;background:#a8a8a8"></div>
<div class="t" style="right:882.4px;top:443.25px;color:#222;font-size:9.2px;-webkit-text-stroke:0.1px #222">08/13/2021</div>
<div class="t" style="left:89.5px;top:443.25px;letter-spacing:-0.3px;color:#222;font-size:9.2px;-webkit-text-stroke:0.1px #222">Furnitury</div>
<div class="t" style="left:161px;top:443.25px;letter-spacing:-0.2px;color:#222;font-size:9.2px;-webkit-text-stroke:0.1px #222">Captop</div>
<div class="t" style="left:227px;top:443.25px;letter-spacing:-0.2px;color:#222;font-size:9.2px;-webkit-text-stroke:0.1px #222">3,300</div>
<div class="t" style="right:648.2px;top:443.25px;color:#222;font-size:9.2px;-webkit-text-stroke:0.1px #222">750</div>
<div class="t" style="left:317px;width:70px;text-align:center;top:443.25px;color:#222;font-size:9.2px;-webkit-text-stroke:0.1px #222">8</div>
<div class="a" style="left:19px;top:453.20px;width:355px;height:13.20px;background:#ffffff"></div>
<div class="a" style="left:0;top:452.70px;width:374px;height:1px;background:#dde2e8"></div>
<div class="t" style="left:0;width:13.5px;text-align:center;top:456.80px;font-size:9.3px;color:#222;-webkit-text-stroke:0.15px #222">17</div>
<div class="a" style="left:14.5px;top:463.40px;width:3px;height:1.5px;background:#a8a8a8"></div>
<div class="t" style="right:882.4px;top:456.60px;color:#222;font-size:9.2px;-webkit-text-stroke:0.1px #222">02/13/2021</div>
<div class="t" style="left:89.5px;top:456.60px;letter-spacing:-0.3px;color:#222;font-size:9.2px;-webkit-text-stroke:0.1px #222">Furnitng</div>
<div class="t" style="left:161px;top:456.60px;letter-spacing:-0.2px;color:#222;font-size:9.2px;-webkit-text-stroke:0.1px #222">Chair</div>
<div class="t" style="left:227px;top:456.60px;letter-spacing:-0.2px;color:#222;font-size:9.2px;-webkit-text-stroke:0.1px #222">Eest</div>
<div class="t" style="right:648.2px;top:456.60px;color:#222;font-size:9.2px;-webkit-text-stroke:0.1px #222">1,500</div>
<div class="t" style="left:317px;width:70px;text-align:center;top:456.60px;color:#222;font-size:9.2px;-webkit-text-stroke:0.1px #222">1</div>
<div class="a" style="left:19px;top:466.40px;width:355px;height:13.70px;background:#e8eef7"></div>
<div class="a" style="left:0;top:465.90px;width:374px;height:1px;background:#dde2e8"></div>
<div class="t" style="left:0;width:13.5px;text-align:center;top:470.25px;font-size:9.3px;color:#222;-webkit-text-stroke:0.15px #222">18</div>
<div class="a" style="left:14.5px;top:477.10px;width:3px;height:1.5px;background:#a8a8a8"></div>
<div class="t" style="right:882.4px;top:470.05px;color:#222;font-size:9.2px;-webkit-text-stroke:0.1px #222">01/11/2021</div>
<div class="t" style="left:89.5px;top:470.05px;letter-spacing:-0.3px;color:#222;font-size:9.2px;-webkit-text-stroke:0.1px #222">Clothing</div>
<div class="t" style="left:161px;top:470.05px;letter-spacing:-0.2px;color:#222;font-size:9.2px;-webkit-text-stroke:0.1px #222">Chair</div>
<div class="t" style="left:227px;top:470.05px;letter-spacing:-0.2px;color:#222;font-size:9.2px;-webkit-text-stroke:0.1px #222">East</div>
<div class="t" style="right:648.2px;top:470.05px;color:#222;font-size:9.2px;-webkit-text-stroke:0.1px #222">550</div>
<div class="t" style="left:317px;width:70px;text-align:center;top:470.05px;color:#222;font-size:9.2px;-webkit-text-stroke:0.1px #222">8</div>
<div class="a" style="left:19px;top:480.10px;width:355px;height:13.30px;background:#ffffff"></div>
<div class="a" style="left:0;top:479.60px;width:374px;height:1px;background:#dde2e8"></div>
<div class="t" style="left:0;width:13.5px;text-align:center;top:483.75px;font-size:9.3px;color:#222;-webkit-text-stroke:0.15px #222">19</div>
<div class="a" style="left:14.5px;top:490.40px;width:3px;height:1.5px;background:#a8a8a8"></div>
<div class="t" style="right:882.4px;top:483.55px;color:#222;font-size:9.2px;-webkit-text-stroke:0.1px #222">02/01/2021</div>
<div class="t" style="left:89.5px;top:483.55px;letter-spacing:-0.3px;color:#222;font-size:9.2px;-webkit-text-stroke:0.1px #222">Office Supplies</div>
<div class="t" style="left:161px;top:483.55px;letter-spacing:-0.2px;color:#222;font-size:9.2px;-webkit-text-stroke:0.1px #222">Printer</div>
<div class="t" style="left:227px;top:483.55px;letter-spacing:-0.2px;color:#222;font-size:9.2px;-webkit-text-stroke:0.1px #222">Eest</div>
<div class="t" style="right:648.2px;top:483.55px;color:#222;font-size:9.2px;-webkit-text-stroke:0.1px #222">1,500</div>
<div class="t" style="left:317px;width:70px;text-align:center;top:483.55px;color:#222;font-size:9.2px;-webkit-text-stroke:0.1px #222">1</div>
<div class="a" style="left:19px;top:493.40px;width:355px;height:13.80px;background:#e8eef7"></div>
<div class="a" style="left:0;top:492.90px;width:374px;height:1px;background:#dde2e8"></div>
<div class="t" style="left:0;width:13.5px;text-align:center;top:497.30px;font-size:9.3px;color:#222;-webkit-text-stroke:0.15px #222">20</div>
<div class="a" style="left:14.5px;top:504.20px;width:3px;height:1.5px;background:#a8a8a8"></div>
<div class="t" style="right:882.4px;top:497.10px;color:#222;font-size:9.2px;-webkit-text-stroke:0.1px #222">01/18/2021</div>
<div class="t" style="left:89.5px;top:497.10px;letter-spacing:-0.3px;color:#222;font-size:9.2px;-webkit-text-stroke:0.1px #222">Electronic</div>
<div class="t" style="left:161px;top:497.10px;letter-spacing:-0.2px;color:#222;font-size:9.2px;-webkit-text-stroke:0.1px #222">Chair</div>
<div class="t" style="left:227px;top:497.10px;letter-spacing:-0.2px;color:#222;font-size:9.2px;-webkit-text-stroke:0.1px #222">West</div>
<div class="t" style="right:648.2px;top:497.10px;color:#222;font-size:9.2px;-webkit-text-stroke:0.1px #222">650</div>
<div class="t" style="left:317px;width:70px;text-align:center;top:497.10px;color:#222;font-size:9.2px;-webkit-text-stroke:0.1px #222">2</div>
<div class="a" style="left:19px;top:507.20px;width:355px;height:14.05px;background:#ffffff"></div>
<div class="a" style="left:0;top:506.70px;width:374px;height:1px;background:#dde2e8"></div>
<div class="t" style="left:0;width:13.5px;text-align:center;top:511.23px;font-size:9.3px;color:#222;-webkit-text-stroke:0.15px #222">20</div>
<div class="a" style="left:14.5px;top:518.25px;width:3px;height:1.5px;background:#a8a8a8"></div>
<div class="t" style="right:882.4px;top:511.03px;color:#222;font-size:9.2px;-webkit-text-stroke:0.1px #222">01/01/2021</div>
<div class="t" style="left:89.5px;top:511.03px;letter-spacing:-0.3px;color:#222;font-size:9.2px;-webkit-text-stroke:0.1px #222">Chair</div>
<div class="t" style="left:161px;top:511.03px;letter-spacing:-0.2px;color:#222;font-size:9.2px;-webkit-text-stroke:0.1px #222">Deotte</div>
<div class="t" style="left:227px;top:511.03px;letter-spacing:-0.2px;color:#222;font-size:9.2px;-webkit-text-stroke:0.1px #222">Nest</div>
<div class="t" style="right:648.2px;top:511.03px;color:#222;font-size:9.2px;-webkit-text-stroke:0.1px #222">550</div>
<div class="t" style="left:317px;width:70px;text-align:center;top:511.03px;color:#222;font-size:9.2px;-webkit-text-stroke:0.1px #222">9</div>
<div class="a" style="left:19px;top:521.25px;width:355px;height:13.75px;background:#e8eef7"></div>
<div class="a" style="left:0;top:520.75px;width:374px;height:1px;background:#dde2e8"></div>
<div class="t" style="left:0;width:13.5px;text-align:center;top:525.12px;font-size:9.3px;color:#222;-webkit-text-stroke:0.15px #222">22</div>
<div class="a" style="left:14.5px;top:532.00px;width:3px;height:1.5px;background:#a8a8a8"></div>
<div class="t" style="right:882.4px;top:524.92px;color:#222;font-size:9.2px;-webkit-text-stroke:0.1px #222">01/03/2021</div>
<div class="t" style="left:89.5px;top:524.92px;letter-spacing:-0.3px;color:#222;font-size:9.2px;-webkit-text-stroke:0.1px #222">Furniture</div>
<div class="t" style="left:161px;top:524.92px;letter-spacing:-0.2px;color:#222;font-size:9.2px;-webkit-text-stroke:0.1px #222">Daptor</div>
<div class="t" style="left:227px;top:524.92px;letter-spacing:-0.2px;color:#222;font-size:9.2px;-webkit-text-stroke:0.1px #222">Nraal</div>
<div class="t" style="right:648.2px;top:524.92px;color:#222;font-size:9.2px;-webkit-text-stroke:0.1px #222">750</div>
<div class="t" style="left:317px;width:70px;text-align:center;top:524.92px;color:#222;font-size:9.2px;-webkit-text-stroke:0.1px #222">5</div>
<div class="a" style="left:19px;top:535.00px;width:355px;height:13.75px;background:#ffffff"></div>
<div class="a" style="left:0;top:534.50px;width:374px;height:1px;background:#dde2e8"></div>
<div class="t" style="left:0;width:13.5px;text-align:center;top:538.88px;font-size:9.3px;color:#222;-webkit-text-stroke:0.15px #222">28</div>
<div class="a" style="left:14.5px;top:545.75px;width:3px;height:1.5px;background:#a8a8a8"></div>
<div class="t" style="right:882.4px;top:538.67px;color:#222;font-size:9.2px;-webkit-text-stroke:0.1px #222">01/03/2021</div>
<div class="t" style="left:89.5px;top:538.67px;letter-spacing:-0.3px;color:#222;font-size:9.2px;-webkit-text-stroke:0.1px #222">Flectronic</div>
<div class="t" style="left:161px;top:538.67px;letter-spacing:-0.2px;color:#222;font-size:9.2px;-webkit-text-stroke:0.1px #222">Eaast</div>
<div class="t" style="left:227px;top:538.67px;letter-spacing:-0.2px;color:#222;font-size:9.2px;-webkit-text-stroke:0.1px #222">Eest</div>
<div class="t" style="right:648.2px;top:538.67px;color:#222;font-size:9.2px;-webkit-text-stroke:0.1px #222">4510</div>
<div class="t" style="left:317px;width:70px;text-align:center;top:538.67px;color:#222;font-size:9.2px;-webkit-text-stroke:0.1px #222">8</div>
<div class="a" style="left:19px;top:548.75px;width:355px;height:13.75px;background:#e8eef7"></div>
<div class="a" style="left:0;top:548.25px;width:374px;height:1px;background:#dde2e8"></div>
<div class="t" style="left:0;width:13.5px;text-align:center;top:552.62px;font-size:9.3px;color:#222;-webkit-text-stroke:0.15px #222">20</div>
<div class="a" style="left:14.5px;top:559.50px;width:3px;height:1.5px;background:#a8a8a8"></div>
<div class="t" style="right:882.4px;top:552.42px;color:#222;font-size:9.2px;-webkit-text-stroke:0.1px #222">01/02/2021</div>
<div class="t" style="left:89.5px;top:552.42px;letter-spacing:-0.3px;color:#222;font-size:9.2px;-webkit-text-stroke:0.1px #222">Office Supplies</div>
<div class="t" style="left:161px;top:552.42px;letter-spacing:-0.2px;color:#222;font-size:9.2px;-webkit-text-stroke:0.1px #222">East</div>
<div class="t" style="left:227px;top:552.42px;letter-spacing:-0.2px;color:#222;font-size:9.2px;-webkit-text-stroke:0.1px #222">Eest</div>
<div class="t" style="right:648.2px;top:552.42px;color:#222;font-size:9.2px;-webkit-text-stroke:0.1px #222">1,500</div>
<div class="t" style="left:317px;width:70px;text-align:center;top:552.42px;color:#222;font-size:9.2px;-webkit-text-stroke:0.1px #222">2</div>
<div class="a" style="left:19px;top:562.50px;width:355px;height:13.10px;background:#ffffff"></div>
<div class="a" style="left:0;top:562.00px;width:374px;height:1px;background:#dde2e8"></div>
<div class="t" style="left:0;width:13.5px;text-align:center;top:566.05px;font-size:9.3px;color:#222;-webkit-text-stroke:0.15px #222">26</div>
<div class="a" style="left:14.5px;top:572.60px;width:3px;height:1.5px;background:#a8a8a8"></div>
<div class="t" style="right:882.4px;top:565.85px;color:#222;font-size:9.2px;-webkit-text-stroke:0.1px #222">02/08/2021</div>
<div class="t" style="left:89.5px;top:565.85px;letter-spacing:-0.3px;color:#222;font-size:9.2px;-webkit-text-stroke:0.1px #222">Furniture</div>
<div class="t" style="left:161px;top:565.85px;letter-spacing:-0.2px;color:#222;font-size:9.2px;-webkit-text-stroke:0.1px #222">Daptee</div>
<div class="t" style="left:227px;top:565.85px;letter-spacing:-0.2px;color:#222;font-size:9.2px;-webkit-text-stroke:0.1px #222">North</div>
<div class="t" style="right:648.2px;top:565.85px;color:#222;font-size:9.2px;-webkit-text-stroke:0.1px #222">2,500</div>
<div class="t" style="left:317px;width:70px;text-align:center;top:565.85px;color:#222;font-size:9.2px;-webkit-text-stroke:0.1px #222">1</div>
<div class="a" style="left:19px;top:575.60px;width:355px;height:9.70px;background:#e8eef7"></div>
<div class="a" style="left:0;top:575.10px;width:374px;height:1px;background:#dde2e8"></div>
<div class="t" style="left:0;width:13.5px;text-align:center;top:578.60px;font-size:9.3px;color:#222;height:7px;overflow:hidden">30</div>
<div class="t" style="left:0;width:13.5px;text-align:center;top:95.80px;font-size:9.3px;color:#222;-webkit-text-stroke:0.15px #222">1</div>
<div class="a" style="left:14.5px;top:103.25px;width:3px;height:1.5px;background:#a8a8a8"></div>
<div class="a" style="left:80.5px;top:106.25px;width:1px;height:479.05px;background:#d3dbe6"></div>
<div class="a" style="left:145.0px;top:106.25px;width:1px;height:479.05px;background:#d3dbe6"></div>
<div class="a" style="left:209.0px;top:106.25px;width:1px;height:479.05px;background:#d3dbe6"></div>
<div class="a" style="left:269.5px;top:106.25px;width:1px;height:479.05px;background:#d3dbe6"></div>
<div class="a" style="left:316.5px;top:106.25px;width:1px;height:479.05px;background:#d3dbe6"></div>
<div class="a" style="left:373.2px;top:92.0px;width:1px;height:493.30px;background:#b9cbe2"></div>
<div class="a" style="left:0;top:585.3px;width:374px;height:3.2px;background:#fff"></div>
<div class="a" style="left:0;top:588.5px;width:960px;height:1px;background:#dcdcdc"></div>
<div class="a" style="left:0;top:589.5px;width:960px;height:14.5px;background:#ebebeb"></div>
<div class="a" style="left:0;top:604px;width:960px;height:1px;background:#e2e2e2"></div>
<div class="a" style="left:0;top:605px;width:960px;height:19px;background:#f4f4f4"></div>
<div class="a" style="left:944px;top:77px;width:16px;height:511px;background:#f0f0f0;border-left:1px solid #dcdcdc"></div>
<div class="a" style="left:945.5px;top:77px;width:14px;height:14px;background:#fff"></div>
<svg class="a" style="left:949px;top:81px" width="8" height="5"><path d="M0.5 4.5 L4 0.5 L7.5 4.5Z" fill="#6d6d6d"/></svg>
<div class="a" style="left:949.2px;top:92.3px;width:7.5px;height:138px;background:#a7a7a7;border-radius:4px"></div>
<svg class="a" style="left:949.5px;top:580px" width="7" height="5"><path d="M0 0.5 L7 0.5 L3.5 4.5Z" fill="#6d6d6d"/></svg>
<svg class="a" style="left:936.5px;top:594px" width="10" height="8"><path d="M0.5 0.5 L4.5 3.5 L0.5 6.5Z" fill="#6a6a6a"/><rect x="7.5" y="0" width="1" height="7" fill="#888"/></svg>
<div class="t" style="left:6.5px;top:58.5px;font-size:9px;color:#222;-webkit-text-stroke:0.15px #222">Seelc</div>
<div class="a" style="left:36px;top:56.5px;width:1px;height:13px;background:#e2e2e2"></div>
<svg class="a" style="left:62.5px;top:60.8px" width="6" height="5"><path d="M0.5 0.5 L5.5 0.5 L3 4Z" fill="none" stroke="#888" stroke-width="0.9"/></svg>
<div class="a" style="left:85.2px;top:56.5px;width:1px;height:13px;background:#e0e0e0"></div>
<div class="a" style="left:90px;top:56.5px;width:1px;height:13px;background:#e0e0e0"></div>
<svg class="a" style="left:945.5px;top:61px" width="6.5" height="5"><path d="M0.8 0.5 L5.7 4.5 M5.7 0.5 L0.8 4.5" stroke="#333" stroke-width="1.3"/></svg>
<div class="a" style="left:882.5px;top:27.5px;width:67px;height:18px;background:#f3f5f3;border:1px solid #d8ddd8;border-radius:3px"></div>
<svg class="a" style="left:888px;top:31px" width="11" height="11"><path d="M8 2.5 A3.6 3.6 0 1 0 8 7.5" fill="none" stroke="#3c8a4e" stroke-width="1.6"/><path d="M7 7 L10 10" stroke="#3c8a4e" stroke-width="1.6"/></svg>
<div class="t" style="left:905px;top:32px;font-size:10.5px;color:#222">Spprch</div>
<svg class="a" style="left:0;top:0" width="200" height="26"><rect x="12.75" y="8" width="12.25" height="11" fill="#d9f2dc"/><path d="M15.5 8 L16.3 8 L16.6 10.5 L22.6 13.3 L18.5 14.3 L13 14.3 L13 15.1 L19 15.1" fill="#1d6d37" stroke="#1d6d37" stroke-width="0.6"/><rect x="15.4" y="8" width="0.9" height="6" fill="#1d6d37"/><rect x="13" y="15.8" width="9" height="0.8" fill="#9fd0a8"/><rect x="38.6" y="8" width="11.9" height="10.8" fill="none" stroke="#d9f2dc" stroke-width="1.1"/><path d="M38 7.6 H51" stroke="#d9f2dc" stroke-width="0.8"/><path d="M38.6 13.6 H50.5" stroke="#d9f2dc" stroke-width="1"/><path d="M40.8 12 L42.2 9.5 L43.6 12" fill="none" stroke="#d9f2dc" stroke-width="0.9"/><path d="M45 12 H49" stroke="#8fc49a" stroke-width="0.7"/><path d="M39.3 16.4 H49.8" stroke="#2f7a45" stroke-width="2.4"/><path d="M42.5 15 V18 M46 15 V18" stroke="#d9f2dc" stroke-width="0.7"/><rect x="68.75" y="7.75" width="13.25" height="11.25" fill="#f5fbf6"/><path d="M71.3 12.8 L74.6 15.4 L75.9 12.6 M74.6 15.4 L79.3 12.8" fill="none" stroke="#1f3a28" stroke-width="1.1"/><ellipse cx="94.8" cy="11.5" rx="2.6" ry="3.3" fill="none" stroke="#d9f2dc" stroke-width="1.6"/><path d="M97.3 12.6 L101.8 10.3 M97.3 13 L103 17.3" stroke="#d9f2dc" stroke-width="1.6"/><path d="M100.5 9 L103.3 9.4 L101.8 11.8Z" fill="#d9f2dc"/><rect x="101.2" y="15.6" width="3.5" height="3.5" fill="#d9f2dc"/><path d="M95 16.5 L99 19" stroke="#d9f2dc" stroke-width="1.3"/><path d="M114.8 13.7 H118.6 L120.7 17.4 L122.8 13.7 H126.5 V19.5 H114.8Z" fill="#d9f2dc"/><path d="M115.3 11.2 L118.6 10 L120 7.4 L122.2 7.8 L122 10.2 L125.8 8.6 L126.2 10.8 L122 12.2 L117.3 12.4Z" fill="#d9f2dc"/><path d="M141.3 7.9 L146.2 12.3 L141.7 17.2 L140.2 14.2 L137.1 13 L140.2 11.4Z" fill="#d9f2dc"/><path d="M160.5 11.8 H167.5" stroke="#86bf92" stroke-width="1.5"/><path d="M162 13.6 H166 L164 15.6Z" fill="#d9f2dc"/></svg>
<svg class="a" style="left:760px;top:0" width="200" height="26"><rect x="14.9" y="8.9" width="12.3" height="8.2" fill="#d9f2dc"/><path d="M14.9 11.3 H27.2" stroke="#5e9e6d" stroke-width="0.7"/><path d="M15 14.5 H18.5 L19.2 16" stroke="#1d6d37" stroke-width="1"/><path d="M33.5 12.6 L35.8 14.9 L38.1 12.6" fill="#d9f2dc" stroke="#d9f2dc" stroke-width="0.8"/><circle cx="63.5" cy="11.4" r="3.6" fill="#d9f2dc"/><path d="M64.8 7.2 L67 7.6 L66.6 10" fill="#d9f2dc"/><circle cx="63.8" cy="11.3" r="1" fill="#3b6a48"/><path d="M56.8 17.6 L60.4 14.2" stroke="#d9f2dc" stroke-width="3.2" stroke-linecap="round"/></svg>
<div class="a" style="left:851.5px;top:11.6px;width:11px;height:1.2px;background:#d9f2dc"></div>
<svg class="a" style="left:888.5px;top:8px" width="12" height="10"><rect x="0.6" y="2.1" width="8.5" height="7.3" fill="none" stroke="#d9f2dc" stroke-width="1.1"/><path d="M2.6 2.1 V0.6 H11 V7.6 H9.1" fill="none" stroke="#d9f2dc" stroke-width="1.1"/></svg>
<svg class="a" style="left:935.5px;top:8.5px" width="9.5" height="9.5"><path d="M0.5 0.5 L9 9 M9 0.5 L0.5 9" stroke="#d9f2dc" stroke-width="1.1"/></svg>
<div class="a" style="left:414px;top:106px;width:477px;height:446px;background:#f9fafb;box-shadow:-1px 0 3px rgba(0,0,0,0.10), 0 1px 2px rgba(0,0,0,0.08);border-left:1px solid #e4e6ea;border-top:1px solid #eceef1"></div>
<div class="t" style="left:429.5px;top:119.5px;font-size:14px;font-weight:bold;color:#2f609f">Category Summary</div>
<div class="a" style="left:426px;top:146px;width:458px;height:1px;background:#d7dadf"></div>
<div class="a" style="left:426px;top:158.5px;width:246px;height:150px;background:#fff;border:1px solid #9fb5d0"></div>
<div class="a" style="left:426px;top:158.5px;width:246px;height:20.7px;background:#3168ae"></div>
<div class="t" style="left:434.6px;top:163.8px;font-size:11px;color:#f2f6fb;-webkit-text-stroke:0.3px #f2f6fb">Category</div>
<div class="t" style="right:377.5px;top:163.8px;font-size:11px;letter-spacing:-0.1px;color:#f2f6fb;-webkit-text-stroke:0.3px #f2f6fb">Total Sales</div>
<div class="t" style="right:293.5px;top:163.8px;font-size:11px;letter-spacing:-0.1px;color:#f2f6fb;-webkit-text-stroke:0.3px #f2f6fb">Total Quantity</div>
<div class="t" style="left:433.8px;top:187.4px;font-size:12.5px;letter-spacing:-0.25px;color:#111;-webkit-text-stroke:0.15px #111">Electronics</div>
<div class="t" style="right:372.5px;top:187.4px;font-size:12.5px;color:#111;-webkit-text-stroke:0.15px #111">32,500</div>
<div class="t" style="right:299px;top:187.4px;font-size:12.5px;color:#111;-webkit-text-stroke:0.15px #111">85</div>
<div class="a" style="left:427px;top:204.7px;width:244px;height:1px;background:#dcdfe3"></div>
<div class="t" style="left:433.8px;top:213.4px;font-size:12.5px;letter-spacing:-0.25px;color:#111;-webkit-text-stroke:0.15px #111">Furniture</div>
<div class="t" style="right:372.5px;top:213.4px;font-size:12.5px;color:#111;-webkit-text-stroke:0.15px #111">24,300</div>
<div class="t" style="right:299px;top:213.4px;font-size:12.5px;color:#111;-webkit-text-stroke:0.15px #111">110</div>
<div class="a" style="left:427px;top:230.7px;width:244px;height:1px;background:#dcdfe3"></div>
<div class="t" style="left:433.8px;top:239.4px;font-size:12.5px;letter-spacing:-0.25px;color:#111;-webkit-text-stroke:0.15px #111">Office Supplies</div>
<div class="t" style="right:372.5px;top:239.4px;font-size:12.5px;color:#111;-webkit-text-stroke:0.15px #111">18,750</div>
<div class="t" style="right:299px;top:239.4px;font-size:12.5px;color:#111;-webkit-text-stroke:0.15px #111">215</div>
<div class="a" style="left:427px;top:256.7px;width:244px;height:1px;background:#dcdfe3"></div>
<div class="t" style="left:433.8px;top:265.4px;font-size:12.5px;letter-spacing:-0.25px;color:#111;-webkit-text-stroke:0.15px #111">Clothing</div>
<div class="t" style="right:372.5px;top:265.4px;font-size:12.5px;color:#111;-webkit-text-stroke:0.15px #111">14,600</div>
<div class="t" style="right:299px;top:265.4px;font-size:12.5px;color:#111;-webkit-text-stroke:0.15px #111">190</div>
<div class="a" style="left:427px;top:283px;width:244px;height:24.5px;background:#e2eaf4;border-top:1px solid #d0d9e4"></div>
<div class="t" style="left:433.8px;top:291.4px;font-size:12.5px;letter-spacing:-0.1px;color:#111;-webkit-text-stroke:0.15px #111">Grand Total</div>
<div class="t" style="right:372.5px;top:291.4px;font-size:12.5px;font-weight:bold;color:#1a1a1a">90,150</div>
<div class="t" style="right:299px;top:291.4px;font-size:12.5px;font-weight:bold;color:#1a1a1a">600</div>
<div class="a" style="left:421px;top:333px;width:256px;height:1px;background:#e0e2e6"></div>
<div class="a" style="left:683.8px;top:152.5px;width:209.5px;height:400.5px;background:#f0f0f1;border:1px solid #dedede;border-radius:2px;box-shadow:0 1px 3px rgba(0,0,0,0.12)"></div>
<div class="t" style="left:693.8px;top:161.5px;font-size:13.2px;color:#333">PivotTable Fields</div>
<svg class="a" style="left:878.5px;top:163.5px" width="9" height="8"><path d="M1 1 L8 7" stroke="#333" stroke-width="1.4"/></svg>
<div class="a" style="left:694.5px;top:185px;width:172.5px;height:15.5px;background:#fff;border:1px solid #e3e3e3"></div>
<div class="t" style="left:698.5px;top:188.5px;font-size:8.5px;color:#9a9a9a">Selepactn lleoducrt d tem.com</div>
<svg class="a" style="left:859px;top:191px" width="5" height="4"><path d="M0 0 H5 L2.5 3.5Z" fill="#888"/></svg>
<div class="a" style="left:872.5px;top:185.5px;width:13.5px;height:13.5px;background:#eef2f8;border:1.2px solid #7f9fca"></div>
<svg class="a" style="left:875px;top:188px" width="9" height="8"><path d="M1.5 4 L3.8 6.2 L7.8 1.8" fill="none" stroke="#222" stroke-width="1.5"/></svg>
<div class="a" style="left:693.5px;top:207.5px;width:192.5px;height:106.5px;background:#fff;border:1px solid #e0e0e0"></div>
<div class="a" style="left:697.5px;top:214px;width:12px;height:11.5px;border:1.2px solid #555;background:#fff"></div>
<div class="t" style="left:717.8px;top:215.3px;font-size:12px;letter-spacing:-0.25px;color:#2a2a2a;-webkit-text-stroke:0.12px #2a2a2a">Category</div>
<div class="a" style="left:697.5px;top:233.2px;width:12px;height:11.5px;border:1.2px solid #555;background:#fff"></div>
<svg class="a" style="left:698.5px;top:234.2px" width="10" height="10"><path d="M1.5 9 L8.8 1.2" fill="none" stroke="#888" stroke-width="1"/></svg>
<div class="t" style="left:717.8px;top:234.5px;font-size:12px;letter-spacing:-0.25px;color:#2a2a2a;-webkit-text-stroke:0.12px #2a2a2a">Product</div>
<div class="a" style="left:697.5px;top:252.8px;width:12px;height:11.5px;border:1.2px solid #555;background:#fff"></div>
<svg class="a" style="left:698.5px;top:253.8px" width="10" height="10"><path d="M1.2 4.8 L3.9 8.2 L9 1.2" fill="none" stroke="#333" stroke-width="1.35"/></svg>
<div class="t" style="left:717.8px;top:254.1px;font-size:12px;letter-spacing:-0.25px;color:#2a2a2a;-webkit-text-stroke:0.12px #2a2a2a">Region</div>
<div class="a" style="left:697.5px;top:272.4px;width:12px;height:11.5px;border:1.2px solid #555;background:#fff"></div>
<svg class="a" style="left:698.5px;top:273.4px" width="10" height="10"><path d="M1.2 4.8 L3.9 8.2 L9 1.2" fill="none" stroke="#333" stroke-width="1.35"/></svg>
<div class="t" style="left:717.8px;top:273.7px;font-size:12px;letter-spacing:-0.25px;color:#2a2a2a;-webkit-text-stroke:0.12px #2a2a2a">Sales</div>
<div class="a" style="left:697.5px;top:292px;width:12px;height:11.5px;border:1.2px solid #555;background:#fff"></div>
<div class="t" style="left:717.8px;top:293.3px;font-size:12px;letter-spacing:-0.25px;color:#2a2a2a;-webkit-text-stroke:0.12px #2a2a2a">Quantity</div>
<div class="a" style="left:694px;top:321px;width:192px;height:1px;background:#dddddd"></div>
<div class="t" style="left:695.5px;top:330.3px;font-size:11px;letter-spacing:0.2px;color:#333">Pivot telds irerpese vetich dows:</div>
<div class="a" style="left:694px;top:347px;width:192px;height:1px;background:#e3e3e3"></div>
<svg class="a" style="left:698px;top:354px" width="11" height="10"><path d="M0.5 0.5 H10.5 L6.5 5 V9.5 L4.5 9.5 V5Z" fill="#444"/></svg>
<div class="t" style="left:715.5px;top:354px;font-size:11px;font-weight:bold;color:#333">Filterr</div>
<div class="a" style="left:786px;top:350px;width:1px;height:15px;background:#dcdcdc"></div>
<svg class="a" style="left:792.5px;top:353px" width="11" height="11"><rect x="0.5" y="0.5" width="10" height="10" fill="#f6f6f6" stroke="#666" stroke-width="1"/><path d="M0.5 3 H10.5 M0.5 5.5 H10.5 M0.5 8 H10.5" stroke="#777" stroke-width="1"/></svg>
<div class="t" style="left:809.7px;top:354px;font-size:11px;font-weight:bold;letter-spacing:-0.25px;color:#333">Columns</div>
<div class="a" style="left:694px;top:369.3px;width:89.6px;height:38.3px;background:#fff;border:1px solid #dadada"></div>
<div class="a" style="left:789.4px;top:369.3px;width:96.4px;height:38.3px;background:#fff;border:1px solid #dadada"></div>
<div class="a" style="left:694px;top:414.5px;width:192px;height:1px;background:#dddddd"></div>
<div class="a" style="left:786px;top:418px;width:1px;height:17px;background:#dcdcdc"></div>
<svg class="a" style="left:698px;top:421.5px" width="11" height="11"><rect x="0.5" y="0.5" width="10" height="10" fill="#f8f8f8" stroke="#666" stroke-width="1"/><rect x="0.5" y="0.5" width="10" height="2" fill="#555"/></svg>
<div class="t" style="left:715.5px;top:422.5px;font-size:11px;font-weight:bold;color:#333">Rows</div>
<svg class="a" style="left:793px;top:421.5px" width="11" height="11"><path d="M0.5 10.5 V0.5 H10 M3 3 H10 V5.5 H3" fill="none" stroke="#555" stroke-width="1"/><path d="M4.3 4.6 h1" stroke="#555"/></svg>
<div class="t" style="left:809.5px;top:422.5px;font-size:11px;font-weight:bold;color:#333">Values</div>
<div class="a" style="left:694.2px;top:440.2px;width:89.5px;height:43.2px;background:#fff;border:1px solid #d5d5d5"></div>
<div class="a" style="left:696px;top:441.2px;width:85px;height:18px;background:#d6e3f1"></div>
<div class="t" style="left:702.6px;top:445.5px;font-size:10.5px;color:#2a3d5c">Category</div>
<svg class="a" style="left:769.5px;top:447.5px" width="6" height="5"><path d="M0 0 H6 L3 4.5Z" fill="#2d4a73"/></svg>
<div class="a" style="left:789.6px;top:440px;width:96.2px;height:43.1px;background:#fff;border:1px solid #d5d5d5"></div>
<div class="a" style="left:792px;top:441.2px;width:92px;height:17.8px;background:#d6e3f1"></div>
<div class="a" style="left:792px;top:461.3px;width:92px;height:18.7px;background:#d6e3f1"></div>
<div class="t" style="left:797.6px;top:445.6px;font-size:9.9px;color:#2a3d5c">Sum of Sales</div>
<svg class="a" style="left:871px;top:447.5px" width="6" height="5"><path d="M0 0 H6 L3 4.5Z" fill="#2d4a73"/></svg>
<div class="t" style="left:797.2px;top:465.8px;font-size:9.6px;color:#2a3d5c">Sum of Quantity</div>
<svg class="a" style="left:871px;top:467px" width="6" height="6"><path d="M0.5 0.5 H5.5 L3 3 Z M0.5 5.5 H5.5 L3 3" fill="none" stroke="#2d4a73" stroke-width="1.1"/></svg></div></body></html>
